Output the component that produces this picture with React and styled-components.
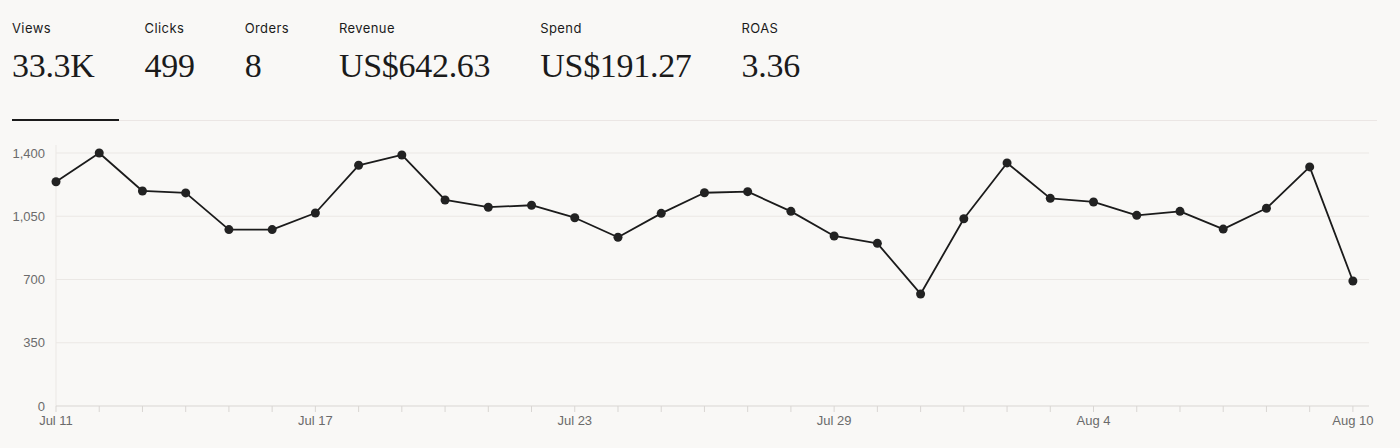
import React from "react";
import styled, { createGlobalStyle } from "styled-components";

const GlobalStyle = createGlobalStyle`
  html, body {
    margin: 0;
    padding: 0;
    background: #f9f8f6;
  }
  body {
    color: #1b1b1b;
    font-family: Inter, "Liberation Sans", sans-serif;
  }
`;

const metrics = [
  { label: "Views", value: "33.3K", active: true },
  { label: "Clicks", value: "499" },
  { label: "Orders", value: "8" },
  { label: "Revenue", value: "US$642.63" },
  { label: "Spend", value: "US$191.27" },
  { label: "ROAS", value: "3.36" },
];

// daily views, Jul 11 - Aug 10
const views = [
  1241, 1400, 1190, 1179, 976, 976, 1068, 1332, 1389, 1140, 1100, 1111, 1042,
  934, 1066, 1180, 1186, 1077, 941, 900, 620, 1036, 1345, 1149, 1129, 1055,
  1077, 979, 1094, 1323, 692,
];

const xLabels = { 0: "Jul 11", 6: "Jul 17", 12: "Jul 23", 18: "Jul 29", 24: "Aug 4", 30: "Aug 10" };
const yTicks = [0, 350, 700, 1050, 1400];

const W = 1365;
const H = 310;
const left = 44;
const right = 1357;
const zeroY = 268;
const topY = 15;
const step = 43.23;

const xAt = (i) => left + i * step;
const yAt = (v) => zeroY - (v / 1400) * (zeroY - topY);

const App = () => {
  const points = views.map((v, i) => `${xAt(i)},${yAt(v)}`).join(" ");

  return (
    <Page>
      <GlobalStyle />
      <TabRow>
        {metrics.map((m) => (
          <Tab key={m.label} $active={m.active}>
            <Label>{m.label}</Label>
            <Value>{m.value}</Value>
          </Tab>
        ))}
      </TabRow>
      <Chart viewBox={`0 0 ${W} ${H}`} width={W} height={H}>
        {yTicks.map((t) => (
          <g key={t}>
            {t > 0 && <GridLine x1={left} x2={right} y1={yAt(t)} y2={yAt(t)} />}
            <AxisText x={33} y={yAt(t)} textAnchor="end" dominantBaseline="central">
              {t.toLocaleString("en-US")}
            </AxisText>
          </g>
        ))}
        <GridLine x1={left} x2={left} y1={7} y2={zeroY} />
        <AxisLine x1={left} x2={right} y1={zeroY} y2={zeroY} />
        {views.map((_, i) => (
          <g key={i}>
            <AxisLine x1={xAt(i)} x2={xAt(i)} y1={zeroY} y2={zeroY + 6} />
            {xLabels[i] && (
              <AxisText x={xAt(i)} y={287} textAnchor="middle">
                {xLabels[i]}
              </AxisText>
            )}
          </g>
        ))}
        <Line points={points} />
        {views.map((v, i) => (
          <Dot key={i} cx={xAt(i)} cy={yAt(v)} r={4.5} />
        ))}
      </Chart>
    </Page>
  );
};

export default App;

const Page = styled.div`
  width: 1365px;
  height: 448px;
  padding: 20px 0 0 12px;
`;

const TabRow = styled.div`
  display: flex;
  gap: 26px;
  border-bottom: 1px solid #ebe6e4;
`;

const Tab = styled.div`
  display: flex;
  flex-direction: column;
  padding: 0 24px 36px 0;
  margin-bottom: -1px;
  border-bottom: 2px solid ${(p) => (p.$active ? "#1b1b1b" : "transparent")};
`;

const Label = styled.div`
  font-size: 13px;
  line-height: 16px;
  letter-spacing: 0.4px;
  font-weight: 400;
`;

const Value = styled.div`
  margin-top: 13px;
  font-family: "Liberation Serif", "DejaVu Serif", serif;
  font-size: 34px;
  line-height: 34px;
  letter-spacing: -0.3px;
`;

const Chart = styled.svg`
  display: block;
  margin-top: 17px;
  overflow: visible;
`;

const GridLine = styled.line`
  stroke: #ebe8e5;
  stroke-width: 1;
`;

const AxisLine = styled.line`
  stroke: #d9d6d3;
  stroke-width: 1;
`;

const AxisText = styled.text`
  font-family: "Liberation Sans", Arial, sans-serif;
  font-size: 13px;
  fill: #6b6b6b;
`;

const Line = styled.polyline`
  fill: none;
  stroke: #1b1b1b;
  stroke-width: 1.8;
  stroke-linejoin: round;
`;

const Dot = styled.circle`
  fill: #222;
`;
